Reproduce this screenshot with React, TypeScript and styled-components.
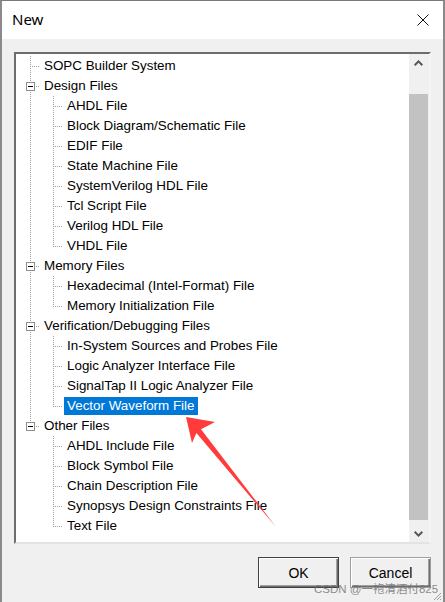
import { createGlobalStyle, styled } from 'styled-components';

type Guide = 'none' | 'pipe' | 'tee' | 'elbow';

type Row = {
  label: string;
  guides: Guide[];
  expander?: boolean;
  selected?: boolean;
};

type Group = { label: string; children: string[] };

const groups: (Group | string)[] = [
  'SOPC Builder System',
  {
    label: 'Design Files',
    children: [
      'AHDL File',
      'Block Diagram/Schematic File',
      'EDIF File',
      'State Machine File',
      'SystemVerilog HDL File',
      'Tcl Script File',
      'Verilog HDL File',
      'VHDL File',
    ],
  },
  {
    label: 'Memory Files',
    children: ['Hexadecimal (Intel-Format) File', 'Memory Initialization File'],
  },
  {
    label: 'Verification/Debugging Files',
    children: [
      'In-System Sources and Probes File',
      'Logic Analyzer Interface File',
      'SignalTap II Logic Analyzer File',
      'Vector Waveform File',
    ],
  },
  {
    label: 'Other Files',
    children: [
      'AHDL Include File',
      'Block Symbol File',
      'Chain Description File',
      'Synopsys Design Constraints File',
      'Text File',
    ],
  },
];

const buildRows = (): Row[] => {
  const rows: Row[] = [];
  groups.forEach((g, i) => {
    const last = i === groups.length - 1;
    if (typeof g === 'string') {
      rows.push({ label: g, guides: [last ? 'elbow' : 'tee'] });
      return;
    }
    rows.push({ label: g.label, guides: [last ? 'elbow' : 'tee'], expander: true });
    g.children.forEach((c, j) => {
      rows.push({
        label: c,
        guides: [last ? 'none' : 'pipe', j === g.children.length - 1 ? 'elbow' : 'tee'],
        selected: c === 'Vector Waveform File',
      });
    });
  });
  return rows;
};

const GlobalStyle = createGlobalStyle`
  html, body {
    margin: 0;
    padding: 0;
    background: #f0f0f0;
  }
  * {
    box-sizing: border-box;
  }
`;

const dotsV = 'repeating-linear-gradient(to bottom, #a0a0a0 0 1px, transparent 1px 2px)';
const dotsH = 'repeating-linear-gradient(to right, #a0a0a0 0 1px, transparent 1px 2px)';

const Window = styled.div`
  position: relative;
  width: 445px;
  height: 602px;
  background: #f0f0f0;
  border-top: 1px solid #7a7a7a;
  border-left: 2px solid #8a8a8a;
  border-right: 2px solid #8a8a8a;
  display: flex;
  flex-direction: column;
  overflow: hidden;
`;

const TitleBar = styled.div`
  height: 38px;
  background: #ffffff;
  display: flex;
  align-items: center;
  justify-content: space-between;
  padding: 0 14px 0 10px;
  flex-shrink: 0;
`;

const Title = styled.span`
  font-family: 'Noto Sans', 'Open Sans', sans-serif;
  font-size: 15px;
  color: #000;
  margin-top: -2px;
`;

const Body = styled.div`
  padding: 13px 12px 0 12px;
  display: flex;
  flex-direction: column;
`;

const Panel = styled.div`
  height: 492px;
  display: flex;
  border-top: 2px solid #6d6d6d;
  border-left: 2px solid #6d6d6d;
  border-right: 2px solid #f4f4f4;
  border-bottom: 2px solid #e3e3e3;
  background: #fff;
`;

const Tree = styled.div`
  flex: 1;
  padding: 2px 0 0 1px;
  overflow: hidden;
`;

const TreeRow = styled.div`
  height: 20px;
  display: flex;
  align-items: center;
`;

const GuideCell = styled.div<{ $kind: Guide }>`
  position: relative;
  width: 23px;
  height: 20px;
  flex-shrink: 0;

  &::before {
    content: '';
    display: ${(p) => (p.$kind === 'none' ? 'none' : 'block')};
    position: absolute;
    left: 13px;
    top: 0;
    width: 1px;
    height: ${(p) => (p.$kind === 'elbow' ? '11px' : '20px')};
    background: ${dotsV};
  }

  &::after {
    content: '';
    display: ${(p) => (p.$kind === 'tee' || p.$kind === 'elbow' ? 'block' : 'none')};
    position: absolute;
    left: 13px;
    top: 10px;
    width: 10px;
    height: 1px;
    background: ${dotsH};
  }
`;

const Expander = styled.div`
  position: absolute;
  left: 9px;
  top: 6px;
  width: 9px;
  height: 9px;
  border: 1px solid #8f8f8f;
  background: #fff;
  z-index: 1;

  &::after {
    content: '';
    position: absolute;
    left: 1px;
    top: 3px;
    width: 5px;
    height: 1px;
    background: #000;
  }
`;

const Label = styled.span<{ $selected?: boolean }>`
  margin-left: 1px;
  height: 18px;
  line-height: 18px;
  padding: 0 3px 0 3px;
  font-family: 'Liberation Sans', Arial, sans-serif;
  font-size: 13.4px;
  white-space: nowrap;
  color: ${(p) => (p.$selected ? '#fff' : '#000')};
  background: ${(p) => (p.$selected ? '#0078d7' : 'transparent')};
`;

const ScrollBar = styled.div`
  width: 20px;
  background: #f0f0f0;
  display: flex;
  flex-direction: column;
  align-items: stretch;
  padding: 0 1px 0 0;
`;

const ScrollButton = styled.div`
  height: 17px;
  display: flex;
  align-items: center;
  justify-content: center;
`;

const ScrollThumb = styled.div`
  height: 426px;
  background: #c2c2c2;
`;

const Spacer = styled.div<{ $h: number }>`
  height: ${(p) => p.$h}px;
`;

const ButtonRow = styled.div`
  display: flex;
  justify-content: flex-end;
  gap: 11px;
  margin-top: 13px;
`;

const Button = styled.div<{ $default?: boolean }>`
  width: 81px;
  height: 31px;
  display: flex;
  align-items: center;
  justify-content: center;
  font-family: 'Liberation Sans', Arial, sans-serif;
  font-size: 14px;
  color: #000;
  background: #f0f0f0;
  border: 1px solid ${(p) => (p.$default ? '#404040' : '#a0a0a0')};
  box-shadow: inset 1px 1px 0 #ffffff, inset -1px -1px 0 #6d6d6d, inset -2px -2px 0 #a0a0a0;
`;

const Watermark = styled.span`
  position: absolute;
  left: 312px;
  top: 579px;
  font-family: 'Liberation Sans', 'Noto Sans CJK SC', sans-serif;
  font-size: 11.5px;
  color: rgba(110, 110, 110, 0.8);
  white-space: nowrap;
  pointer-events: none;
`;

const Overlay = styled.svg`
  position: absolute;
  left: 0;
  top: 0;
  pointer-events: none;
`;

const Grip = styled.svg`
  position: absolute;
  right: 1px;
  bottom: 1px;
`;

export default function App() {
  const rows = buildRows();
  return (
    <>
      <GlobalStyle />
      <Window>
        <TitleBar>
          <Title>New</Title>
          <svg width="12" height="12" viewBox="0 0 12 12">
            <path d="M0.5 0.5 L11.5 11.5 M11.5 0.5 L0.5 11.5" stroke="#111" strokeWidth="1" />
          </svg>
        </TitleBar>
        <Body>
          <Panel>
            <Tree>
              {rows.map((r) => (
                <TreeRow key={r.label}>
                  {r.guides.map((g, i) => (
                    <GuideCell key={i} $kind={g}>
                      {r.expander && i === 0 && <Expander />}
                    </GuideCell>
                  ))}
                  <Label $selected={r.selected}>{r.label}</Label>
                </TreeRow>
              ))}
            </Tree>
            <ScrollBar>
              <ScrollButton>
                <svg width="9" height="6" viewBox="0 0 9 6">
                  <path d="M0.7 5.2 L4.5 1.4 L8.3 5.2" stroke="#555" strokeWidth="2" fill="none" />
                </svg>
              </ScrollButton>
              <Spacer $h={23} />
              <ScrollThumb />
              <Spacer $h={5} />
              <ScrollButton>
                <svg width="9" height="6" viewBox="0 0 9 6">
                  <path d="M0.7 0.8 L4.5 4.6 L8.3 0.8" stroke="#555" strokeWidth="2" fill="none" />
                </svg>
              </ScrollButton>
            </ScrollBar>
          </Panel>
          <ButtonRow>
            <Button $default>OK</Button>
            <Button>Cancel</Button>
          </ButtonRow>
        </Body>
        <Watermark>CSDN @一袍清酒付825</Watermark>
        <Grip width="10" height="10" viewBox="0 0 10 10">
          <path d="M9 2 L2 9 M9 5 L5 9 M9 8 L8 9" stroke="#a0a0a0" strokeWidth="1" />
        </Grip>
        <Overlay width="445" height="602">
          <polygon
            points="184,416 190,442 194.4,432.1 274,526 199,428.3 213,421"
            fill="#ff3b3b"
          />
        </Overlay>
      </Window>
    </>
  );
}
